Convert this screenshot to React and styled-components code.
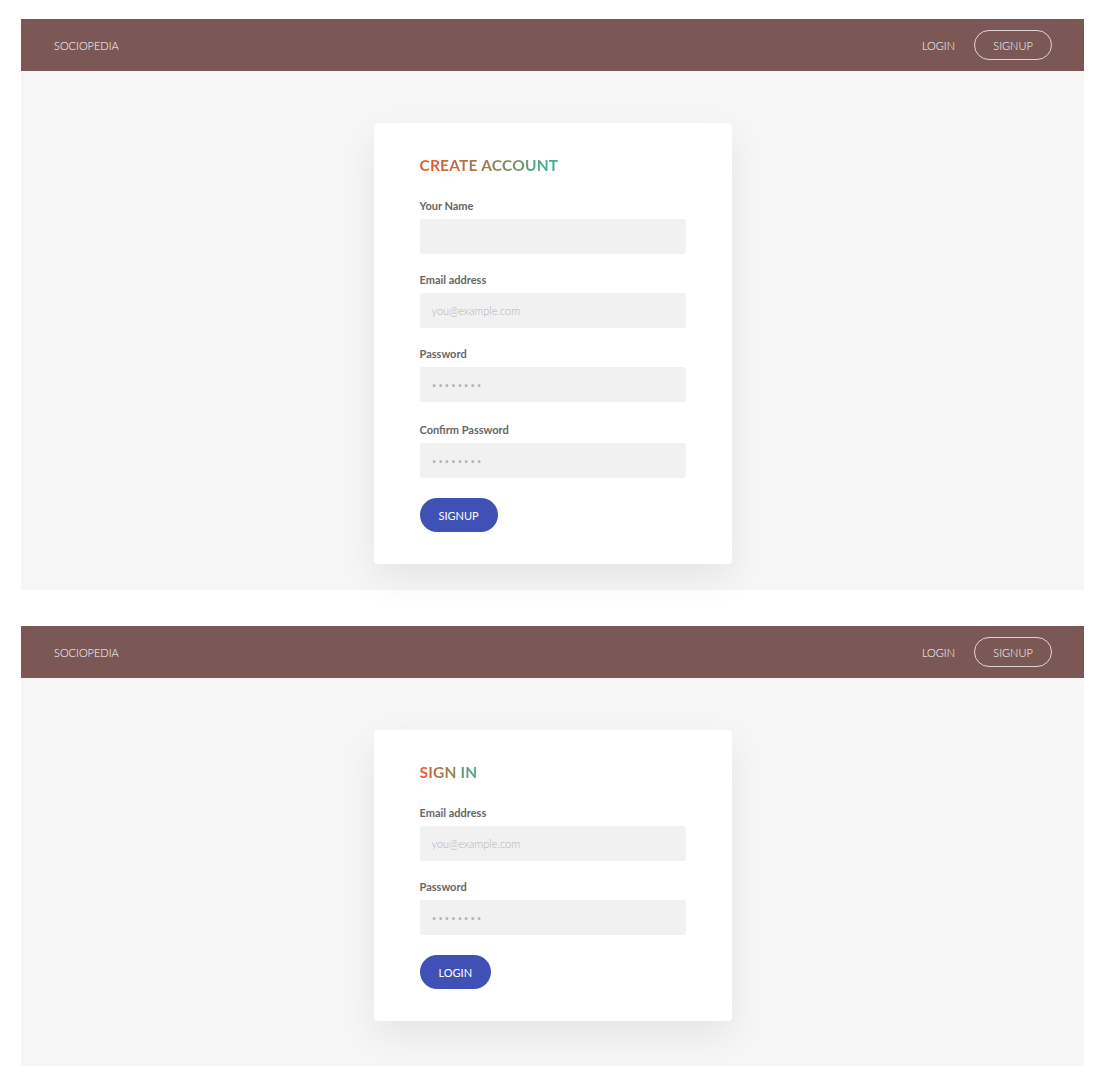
import styled, { createGlobalStyle } from "styled-components";

const GlobalStyle = createGlobalStyle`
  body {
    margin: 0;
    background: #fff;
    font-family: Lato, "Open Sans", "Liberation Sans", sans-serif;
  }
`;

const Page = styled.div`
  display: flex;
  flex-direction: column;
  gap: 36px;
  padding: 19px 20px 22px 21px;
`;

const Screen = styled.section`
  display: flex;
  flex-direction: column;
`;

const NavBar = styled.nav`
  height: 52px;
  background: #7b5855;
  display: flex;
  align-items: center;
  justify-content: space-between;
  padding: 0 32px 0 33px;
  color: #fff;
  font-size: 11px;
  font-weight: 300;
`;

const Brand = styled.div`
  letter-spacing: 0;
`;

const NavLinks = styled.div`
  display: flex;
  align-items: center;
  gap: 19px;
`;

const NavLink = styled.a`
  color: #fff;
  text-decoration: none;
  font-size: 11px;
  ${(p) =>
    p.$outlined &&
    `
    height: 30px;
    width: 78px;
    box-sizing: border-box;
    border: 1px solid rgba(255, 255, 255, 0.75);
    border-radius: 15px;
    display: flex;
    align-items: center;
    justify-content: center;
  `}
`;

const Stage = styled.main`
  background: #f6f6f6;
  display: flex;
  justify-content: center;
  padding: 52px 0 ${(p) => p.$bottom}px;
`;

const Card = styled.form`
  width: 358px;
  box-sizing: border-box;
  background: #fff;
  border-radius: 4px;
  padding: 32px 46px 32px;
  box-shadow: 0 14px 36px rgba(0, 0, 0, 0.07);
  display: flex;
  flex-direction: column;
`;

const Title = styled.h2`
  margin: 0 0 23px;
  align-self: flex-start;
  font-size: 15.5px;
  line-height: 20px;
  font-weight: 700;
  letter-spacing: 0.2px;
  background: linear-gradient(90deg, #ea5828 0%, #9b7f4f 50%, #38b58f 100%);
  -webkit-background-clip: text;
  background-clip: text;
  color: transparent;
`;

const Field = styled.label`
  display: flex;
  flex-direction: column;
  gap: 5px;
  margin-top: ${(p) => p.$extra || 0}px;
  margin-bottom: 18px;

  &:last-of-type {
    margin-bottom: 20px;
  }
`;

const LabelText = styled.span`
  font-size: 11px;
  line-height: 16px;
  font-weight: 700;
  color: #666;
`;

const Input = styled.input`
  height: 35px;
  box-sizing: border-box;
  border: none;
  outline: none;
  border-radius: 3px;
  background: #f1f1f1;
  padding: 0 12px;
  font-family: inherit;
  font-size: 11px;
  font-weight: 300;
  color: #444;

  &::placeholder {
    color: #b3b3b3;
    letter-spacing: ${(p) => (p.type === "password" ? "1.2px" : "0")};
    font-size: ${(p) => (p.type === "password" ? "9px" : "11px")};
  }
`;

const Submit = styled.button`
  align-self: flex-start;
  height: 34px;
  padding: 0 19px;
  border: none;
  border-radius: 17px;
  background: #3f51b5;
  color: #fff;
  font-family: inherit;
  font-size: 11px;
  cursor: pointer;
`;

const Nav = () => (
  <NavBar>
    <Brand>SOCIOPEDIA</Brand>
    <NavLinks>
      <NavLink href="#">LOGIN</NavLink>
      <NavLink href="#" $outlined>
        SIGNUP
      </NavLink>
    </NavLinks>
  </NavBar>
);

const dots = "••••••••";

const signupFields = [
  { label: "Your Name", type: "text", placeholder: "" },
  { label: "Email address", type: "email", placeholder: "you@example.com" },
  { label: "Password", type: "password", placeholder: dots },
  { label: "Confirm Password", type: "password", placeholder: dots, extra: 2 },
];

const loginFields = [
  { label: "Email address", type: "email", placeholder: "you@example.com" },
  { label: "Password", type: "password", placeholder: dots },
];

const AuthScreen = ({ title, fields, action, bottom }) => (
  <Screen>
    <Nav />
    <Stage $bottom={bottom}>
      <Card onSubmit={(e) => e.preventDefault()}>
        <Title>{title}</Title>
        {fields.map((f) => (
          <Field key={f.label} $extra={f.extra}>
            <LabelText>{f.label}</LabelText>
            <Input type={f.type} placeholder={f.placeholder} />
          </Field>
        ))}
        <Submit type="submit">{action}</Submit>
      </Card>
    </Stage>
  </Screen>
);

export default function App() {
  return (
    <>
      <GlobalStyle />
      <Page>
        <AuthScreen title="CREATE ACCOUNT" fields={signupFields} action="SIGNUP" bottom={26} />
        <AuthScreen title="SIGN IN" fields={loginFields} action="LOGIN" bottom={45} />
      </Page>
    </>
  );
}
